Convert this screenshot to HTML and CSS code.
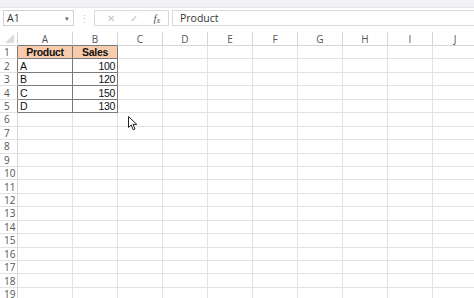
FILE: index.html
```html
<!DOCTYPE html>
<html lang="en">
<head>
    <meta charset="UTF-8">
    <title>Book1 - Excel</title>
    <link rel="stylesheet" href="styles.css">
</head>
<body>
    <div class="top-strip"></div>

    <!-- Name box and formula bar -->
    <div class="formula-bar">
        <div class="name-box">
            <span>A1</span>
            <span class="drop">&#9662;</span>
        </div>
        <div class="grip">&#8942;</div>
        <div class="fx-group">
            <span class="fx-btn cancel">&#10005;</span>
            <span class="fx-btn enter">&#10003;</span>
            <span class="fx-btn fx"><i>f<span class="x">x</span></i></span>
        </div>
        <div class="formula-input">Product</div>
    </div>

    <table class="sheet">
        <colgroup>
            <col class="c-row">
            <col class="c-a">
            <col class="c-b">
            <col><col><col><col><col><col><col><col>
        </colgroup>
        <tr class="col-heads">
            <th class="corner"><span class="tri"></span></th>
            <th class="tb-bottom">A</th><th class="tb-bottom">B</th>
            <th>C</th><th>D</th><th>E</th><th>F</th><th>G</th><th>H</th><th>I</th><th>J</th>
        </tr>
        <tr><th class="tb-right">1</th><td class="t head">Product</td><td class="t head">Sales</td><td></td><td></td><td></td><td></td><td></td><td></td><td></td><td></td></tr>
        <tr><th class="tb-right">2</th><td class="t">A</td><td class="t num">100</td><td></td><td></td><td></td><td></td><td></td><td></td><td></td><td></td></tr>
        <tr><th class="tb-right">3</th><td class="t">B</td><td class="t num">120</td><td></td><td></td><td></td><td></td><td></td><td></td><td></td><td></td></tr>
        <tr><th class="tb-right">4</th><td class="t">C</td><td class="t num">150</td><td></td><td></td><td></td><td></td><td></td><td></td><td></td><td></td></tr>
        <tr><th class="tb-right">5</th><td class="t">D</td><td class="t num">130</td><td></td><td></td><td></td><td></td><td></td><td></td><td></td><td></td></tr>
        <tr><th>6</th><td></td><td></td><td></td><td></td><td></td><td></td><td></td><td></td><td></td><td></td></tr>
        <tr><th>7</th><td></td><td></td><td></td><td></td><td></td><td></td><td></td><td></td><td></td><td></td></tr>
        <tr><th>8</th><td></td><td></td><td></td><td></td><td></td><td></td><td></td><td></td><td></td><td></td></tr>
        <tr><th>9</th><td></td><td></td><td></td><td></td><td></td><td></td><td></td><td></td><td></td><td></td></tr>
        <tr><th>10</th><td></td><td></td><td></td><td></td><td></td><td></td><td></td><td></td><td></td><td></td></tr>
        <tr><th>11</th><td></td><td></td><td></td><td></td><td></td><td></td><td></td><td></td><td></td><td></td></tr>
        <tr><th>12</th><td></td><td></td><td></td><td></td><td></td><td></td><td></td><td></td><td></td><td></td></tr>
        <tr><th>13</th><td></td><td></td><td></td><td></td><td></td><td></td><td></td><td></td><td></td><td></td></tr>
        <tr><th>14</th><td></td><td></td><td></td><td></td><td></td><td></td><td></td><td></td><td></td><td></td></tr>
        <tr><th>15</th><td></td><td></td><td></td><td></td><td></td><td></td><td></td><td></td><td></td><td></td></tr>
        <tr><th>16</th><td></td><td></td><td></td><td></td><td></td><td></td><td></td><td></td><td></td><td></td></tr>
        <tr><th>17</th><td></td><td></td><td></td><td></td><td></td><td></td><td></td><td></td><td></td><td></td></tr>
        <tr><th>18</th><td></td><td></td><td></td><td></td><td></td><td></td><td></td><td></td><td></td><td></td></tr>
        <tr><th>19</th><td></td><td></td><td></td><td></td><td></td><td></td><td></td><td></td><td></td><td></td></tr>
    </table>

    <!-- mouse pointer over the sheet -->
    <svg class="pointer" width="11" height="15" viewBox="0 0 11 15">
        <path d="M0.5 0.5 L0.5 11.5 L3.2 9 L5.2 13.8 L7 13 L5 8.4 L8.8 8.4 Z" fill="#fff" stroke="#222" stroke-width="1" stroke-linejoin="round"/>
    </svg>
</body>
</html>
```

FILE: styles.css
```css
body {
    margin: 0;
    width: 474px;
    height: 298px;
    overflow: hidden;
    background: #ffffff;
    font-family: "Open Sans", "Liberation Sans", sans-serif;
    color: #222;
    position: relative;
}
.top-strip {
    height: 7px;
    background: #f1f1f4;
    border-bottom: 1px solid #e6e6ea;
}
.formula-bar {
    display: flex;
    align-items: center;
    height: 18px;
    padding: 1px 0 0 3px;
}
.name-box {
    width: 71px;
    height: 16px;
    box-sizing: border-box;
    border: 1px solid #d0d0d0;
    display: flex;
    justify-content: space-between;
    align-items: center;
    padding: 0 4px 0 3px;
    font-size: 10.5px;
    color: #333;
}
.name-box .drop {
    font-size: 7px;
    color: #666;
}
.grip {
    width: 20px;
    text-align: center;
    color: #c4c4c4;
    font-size: 11px;
}
.fx-group {
    width: 75px;
    height: 16px;
    box-sizing: border-box;
    border: 1px solid #dadada;
    display: flex;
    align-items: center;
    justify-content: space-around;
    padding-left: 4px;
}
.fx-btn {
    font-size: 10px;
    color: #c0c0c0;
}
.fx-btn.fx {
    font-family: "Liberation Serif", serif;
    font-size: 11px;
    color: #555;
}
.fx-btn.fx .x {
    font-size: 8.5px;
    position: relative;
    top: 1px;
}
.formula-input {
    flex: 1;
    height: 16px;
    box-sizing: border-box;
    margin-left: 3px;
    border: 1px solid #dadada;
    border-right: none;
    padding-left: 7px;
    font-size: 10.5px;
    line-height: 14px;
    color: #333;
}

/* worksheet grid */
.sheet {
    margin-top: 5px;
    border-collapse: separate;
    border-spacing: 0;
    table-layout: fixed;
    width: 476px;
    font-size: 10.5px;
}
.sheet col { width: 45px; }
.sheet col.c-row { width: 18px; }
.sheet col.c-a { width: 55px; }
.sheet col.c-b { width: 45px; }
.sheet th, .sheet td {
    box-sizing: border-box;
    height: 13.45px;
    padding: 0 2px;
    border-right: 1px solid #e2e2e2;
    border-bottom: 1px solid #e2e2e2;
    line-height: 12px;
    white-space: nowrap;
    overflow: hidden;
}
.sheet th {
    font-weight: normal;
    color: #555;
    font-size: 10px;
    text-align: left;
    padding-left: 4px;
    border-right-color: #d6d6d6;
}
.col-heads th {
    height: 14px;
    text-align: center;
    padding: 0;
    border-bottom-color: #d6d6d6;
}
.corner {
    position: relative;
}
.tri {
    position: absolute;
    right: 3px;
    bottom: 2px;
    border-left: 9px solid transparent;
    border-bottom: 9px solid #dcdcdc;
}
.sheet th.tb-right { border-right-color: #7a7a7a; }
.sheet th.tb-bottom { border-bottom-color: #7a7a7a; }
.sheet td.t {
    border-right-color: #7a7a7a;
    border-bottom-color: #7a7a7a;
    font-family: "Liberation Sans", sans-serif;
    font-size: 10.5px;
    letter-spacing: -0.3px;
    color: #111;
}
.sheet td.head {
    background: #f8cbad;
    font-weight: bold;
    text-align: center;
}
.sheet td.num { text-align: right; }

.pointer {
    position: absolute;
    left: 128px;
    top: 116px;
}
```
